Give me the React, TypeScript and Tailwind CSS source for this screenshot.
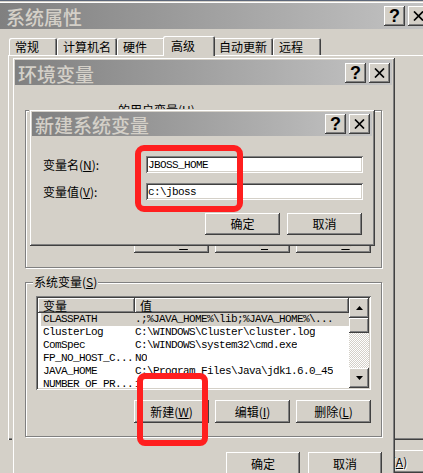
import type { ReactNode } from "react";

const raised = "shadow-[inset_-1px_-1px_#404040,inset_1px_1px_#ffffff,inset_-2px_-2px_#808080]";
const sunken = "shadow-[inset_1px_1px_#808080,inset_-1px_-1px_#ffffff,inset_2px_2px_#404040,inset_-2px_-2px_#d4d0c8]";
const frame = "shadow-[inset_1px_1px_#d4d0c8,inset_-1px_-1px_#404040,inset_2px_2px_#ffffff,inset_-2px_-2px_#808080]";
const mono = "font-['Liberation_Mono',monospace] text-[11px] tracking-[-0.6px]";

const sysVars = [
  ["CLASSPATH", ".;%JAVA_HOME%\\lib;%JAVA_HOME%\\..."],
  ["ClusterLog", "C:\\WINDOWS\\Cluster\\cluster.log"],
  ["ComSpec", "C:\\WINDOWS\\system32\\cmd.exe"],
  ["FP_NO_HOST_C...", "NO"],
  ["JAVA_HOME", "C:\\Program Files\\Java\\jdk1.6.0_45"],
  ["NUMBER OF PR...", "1"],
];

function TitleBtn({ children }: { children: ReactNode }) {
  return (
    <div className={`flex h-[20px] w-[21px] items-center justify-center bg-[#d4d0c8] ${raised}`}>
      {children}
    </div>
  );
}

function TitleBar({ title, className }: { title: string; className: string }) {
  return (
    <div className={`flex shrink-0 items-center justify-between bg-linear-to-r from-[#808080] to-[#c4c4c4] pr-[2px] ${className}`}>
      <span className="pt-[1px] text-[19px] font-medium leading-none text-[#d4d0c8]">{title}</span>
      <div className="flex gap-[3px]">
        <TitleBtn>
          <span className="font-['Liberation_Sans',sans-serif] text-[18px] font-bold leading-none">?</span>
        </TitleBtn>
        <TitleBtn>
          <svg width="11" height="10" viewBox="0 0 11 10">
            <path d="M1 0.5L10 9.5M10 0.5L1 9.5" stroke="#000" strokeWidth="1.7" />
          </svg>
        </TitleBtn>
      </div>
    </div>
  );
}

function Btn({ children, className = "" }: { children: ReactNode; className?: string }) {
  return (
    <div className={`flex items-center justify-center bg-[#d4d0c8] text-[12px] leading-none text-black ${raised} ${className}`}>
      {children}
    </div>
  );
}

function Key({ k, offset = "" }: { k: string; offset?: string }) {
  return (
    <>
      (<span className={`underline ${offset}`}>{k}</span>)
    </>
  );
}

function GroupBox({
  label,
  labelClass = "",
  className = "",
  children,
}: {
  label: ReactNode;
  labelClass?: string;
  className?: string;
  children: ReactNode;
}) {
  return (
    <div className={`flex flex-col border border-[#808080] px-[10px] shadow-[inset_1px_1px_#ffffff,1px_1px_#ffffff] ${className}`}>
      <div className={`-mt-[8px] w-fit bg-[#d4d0c8] px-[1px] text-[12px] leading-[14px] ${labelClass}`}>{label}</div>
      {children}
    </div>
  );
}

function Field({ value }: { value: string }) {
  return (
    <div className={`flex h-[17px] flex-1 items-center bg-white pl-[2px] pt-[1px] ${sunken} ${mono}`}>{value}</div>
  );
}

function ActionRow({ a, b, c, textClass = "" }: { a: ReactNode; b: ReactNode; c: ReactNode; textClass?: string }) {
  return (
    <div className="flex shrink-0 justify-end gap-[6px]">
      <Btn className={`h-[23px] w-[75px] ${textClass}`}>{a}</Btn>
      <Btn className={`h-[23px] w-[75px] ${textClass}`}>{b}</Btn>
      <Btn className={`h-[23px] w-[75px] ${textClass}`}>{c}</Btn>
    </div>
  );
}

function Arrow({ up }: { up: boolean }) {
  return (
    <svg width="7" height="4" viewBox="0 0 7 4">
      <polygon points={up ? "0,4 3.5,0 7,4" : "0,0 3.5,4 7,0"} fill="#000" />
    </svg>
  );
}

function VarList() {
  return (
    <div className={`mt-[7px] flex h-[94px] shrink-0 bg-white p-[2px] ${sunken}`}>
      <div className="flex min-w-0 flex-1 flex-col overflow-hidden">
        <div className="flex h-[15px] shrink-0 text-[12px] leading-none">
          <div className={`flex w-[97px] items-center bg-[#d4d0c8] pl-[5px] ${raised}`}>变量</div>
          <div className={`flex flex-1 items-center bg-[#d4d0c8] pl-[5px] ${raised}`}>值</div>
        </div>
        {sysVars.map(([name, value], i) => (
          <div
            key={name}
            className={`ml-[3px] flex h-[13px] shrink-0 items-start whitespace-nowrap leading-[12px] ${mono} ${i === 0 ? "bg-[#d4d0c8]" : ""}`}
          >
            <span className="w-[94px] shrink-0 overflow-hidden pl-[2px]">{name}</span>
            <span className="overflow-hidden">{value}</span>
          </div>
        ))}
      </div>
      <div className="flex w-[20px] shrink-0 flex-col">
        <div className={`flex h-[20px] items-center justify-center bg-[#d4d0c8] ${raised}`}>
          <Arrow up />
        </div>
        <div className={`h-[15px] bg-[#d4d0c8] ${raised}`} />
        <div className="flex-1 bg-[image:repeating-conic-gradient(#d4d0c8_0%_25%,#ffffff_0%_50%)] bg-[length:2px_2px]" />
        <div className={`flex h-[20px] items-center justify-center bg-[#d4d0c8] ${raised}`}>
          <Arrow up={false} />
        </div>
      </div>
    </div>
  );
}

export default function App() {
  return (
    <div className="relative h-[473px] w-[423px] overflow-hidden bg-[#d4d0c8] font-['Noto_Sans_CJK_SC',sans-serif] text-black">
      {/* 系统属性 */}
      <div className={`absolute -left-[3px] top-0 flex h-[490px] w-[437px] flex-col border-t border-t-[#5d6779] bg-[#d4d0c8] px-[3px] pt-[2px] ${frame}`}>
        <TitleBar title="系统属性" className="h-[26px] pl-[6px]" />
        <div className="ml-[9px] mt-[7px] flex h-[19px] items-end text-[12px] leading-none">
          {["常规", "计算机名", "硬件", "高级", "自动更新", "远程"].map((t) =>
            t === "高级" ? (
              <div
                key={t}
                className="relative z-10 -mx-[2px] -mb-[1px] flex h-[20px] w-[52px] items-center rounded-t-[2px] bg-[#d4d0c8] pl-[8px] shadow-[inset_1px_1px_#ffffff,inset_-1px_0_#404040,inset_-2px_0_#808080]"
              >
                {t}
              </div>
            ) : (
              <div
                key={t}
                className={`flex h-[17px] items-center rounded-t-[2px] pl-[6px] shadow-[inset_1px_1px_#ffffff,inset_-1px_0_#404040,inset_-2px_0_#808080] ${t.length > 2 ? "w-[60px]" : "w-[48px]"}`}
              >
                {t}
              </div>
            ),
          )}
        </div>
        <div className="ml-[8px] mr-[6px] h-[385px] shrink-0 shadow-[inset_1px_1px_#ffffff,inset_-1px_-1px_#404040,inset_-2px_-2px_#808080]" />
        <div className="mr-[6px] mt-[10px] flex justify-end gap-[6px]">
          <Btn className="h-[23px] w-[75px]">确定</Btn>
          <Btn className="h-[23px] w-[75px]">取消</Btn>
          <Btn className="h-[23px] w-[75px] text-[#808080] [text-shadow:1px_1px_#ffffff]">
            应用<Key k="A" />
          </Btn>
        </div>
      </div>

      {/* 环境变量 */}
      <div className={`absolute left-[12px] top-[57px] flex h-[430px] w-[383px] flex-col bg-[#d4d0c8] p-[3px] ${frame}`}>
        <TitleBar title="环境变量" className="h-[25px] pl-[3px]" />
        <div className="flex flex-col px-[10px]">
          <GroupBox
            label={<>的用户变量<Key k="U" /></>}
            labelClass="ml-[81px]"
            className="mt-[25px] h-[158px] pb-[14px]"
          >
            <div className={`mb-[10px] mt-[7px] flex-1 bg-white ${sunken}`} />
            <ActionRow
              textClass="pb-[5px]"
              a={<>新建<Key k="N" offset="underline-offset-[5px]" /></>}
              b={<>编辑<Key k="E" offset="underline-offset-[5px]" /></>}
              c={<>删除<Key k="D" offset="underline-offset-[5px]" /></>}
            />
          </GroupBox>
          <GroupBox label={<>系统变量<Key k="S" /></>} labelClass="-ml-[3px]" className="mt-[14px] pb-[13px]">
            <VarList />
            <div className="mt-[10px]">
              <ActionRow
                a={<>新建<Key k="W" /></>}
                b={<>编辑<Key k="I" /></>}
                c={<>删除<Key k="L" /></>}
              />
            </div>
          </GroupBox>
          <div className="mt-[15px] flex justify-end gap-[8px]">
            <Btn className="h-[23px] w-[74px]">确定</Btn>
            <Btn className="h-[23px] w-[74px]">取消</Btn>
          </div>
        </div>
      </div>

      {/* 新建系统变量 */}
      <div className={`absolute left-[29px] top-[109px] flex h-[137px] w-[346px] flex-col bg-[#d4d0c8] p-[3px] ${frame}`}>
        <TitleBar title="新建系统变量" className="h-[24px] pl-[3px]" />
        <div className="mt-[20px] flex items-center pr-[9px] text-[12px] leading-none">
          <span className="w-[114px] shrink-0 pl-[11px]">
            变量名<Key k="N" />:
          </span>
          <Field value="JBOSS_HOME" />
        </div>
        <div className="mt-[10px] flex items-center pr-[9px] text-[12px] leading-none">
          <span className="w-[114px] shrink-0 pl-[11px]">
            变量值<Key k="V" />:
          </span>
          <Field value="c:\jboss" />
        </div>
        <div className="mt-[13px] flex justify-end gap-[7px] pr-[10px]">
          <Btn className="h-[22px] w-[75px]">确定</Btn>
          <Btn className="h-[22px] w-[75px]">取消</Btn>
        </div>
      </div>

      {/* red highlights */}
      <div className="absolute left-[135px] top-[145px] h-[67px] w-[108px] rounded-[9px] border-[6px] border-[#ff1f1f]" />
      <div className="absolute left-[137px] top-[373px] h-[73px] w-[71px] rounded-[8px] border-[6px] border-[#ff1f1f]" />
    </div>
  );
}
